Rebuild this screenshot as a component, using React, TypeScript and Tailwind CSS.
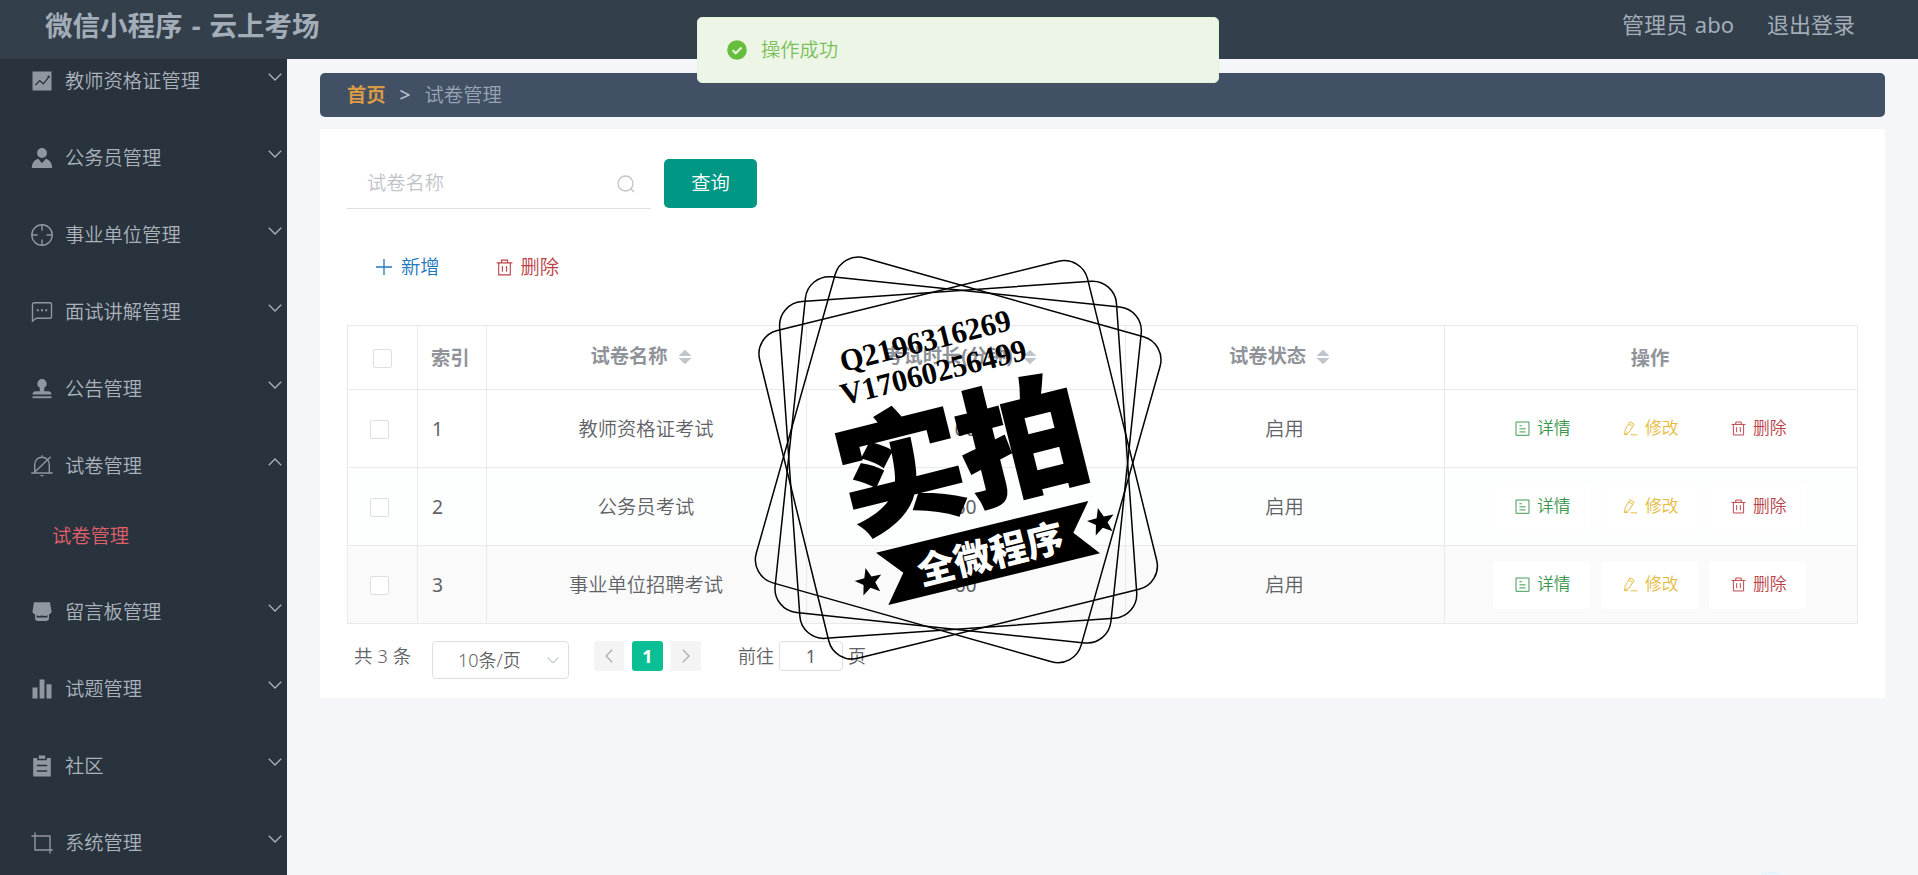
import type { ReactNode } from "react";

type IconProps = { className?: string };

const MENU = [
  { title: "教师资格证管理", icon: <TrendIcon /> },
  { title: "公务员管理", icon: <UserIcon /> },
  { title: "事业单位管理", icon: <AimIcon /> },
  { title: "面试讲解管理", icon: <ChatIcon /> },
  { title: "公告管理", icon: <StampIcon /> },
  { title: "试卷管理", icon: <BellOffIcon />, children: ["试卷管理"] },
  { title: "留言板管理", icon: <ShopIcon /> },
  { title: "试题管理", icon: <BarsIcon /> },
  { title: "社区", icon: <ClipboardIcon /> },
  { title: "系统管理", icon: <CropIcon /> },
];

const ROWS = [
  { id: 1, name: "教师资格证考试", minutes: 60, status: "启用" },
  { id: 2, name: "公务员考试", minutes: 60, status: "启用" },
  { id: 3, name: "事业单位招聘考试", minutes: 60, status: "启用" },
];

/* ---------- icons ---------- */

function Line({ children, className = "size-[22px]", width = 1.4 }: { children: ReactNode; className?: string; width?: number }) {
  return (
    <svg viewBox="0 0 22 22" className={className} fill="none" stroke="currentColor" strokeWidth={width}>
      {children}
    </svg>
  );
}

function Solid({ children }: { children: ReactNode }) {
  return (
    <svg viewBox="0 0 22 22" className="size-[22px]" fill="currentColor">
      {children}
    </svg>
  );
}

function TrendIcon() {
  return (
    <Solid>
      <path d="M1.5 1.5h19v19h-19z" />
      <path d="M4.5 15l4.2-4.4 3.6 3.2 5.4-6.6" fill="none" stroke="#28333e" strokeWidth="1.3" />
      <circle cx="17.6" cy="6.8" r="1.2" fill="#28333e" />
    </Solid>
  );
}

function UserIcon() {
  return (
    <Solid>
      <circle cx="11" cy="6" r="5" />
      <path d="M.8 21c.2-5.2 2.6-8.3 6.5-9.3l3.7 4.6 3.7-4.6c3.9 1 6.3 4.1 6.5 9.3z" />
    </Solid>
  );
}

function AimIcon() {
  return (
    <Line>
      <circle cx="11" cy="11" r="10.2" />
      <path d="M11 1v5.5M11 15.5V21M1 11h5.5M15.5 11H21" />
    </Line>
  );
}

function ChatIcon() {
  return (
    <Line>
      <path d="M1.5 20V3.2A1.5 1.5 0 0 1 3 1.7h16a1.5 1.5 0 0 1 1.5 1.5v12.6a1.5 1.5 0 0 1-1.5 1.5H5.2z" />
      <path d="M5.8 9.2h2M10 9.2h2M14.2 9.2h2" strokeWidth="2" />
    </Line>
  );
}

function StampIcon() {
  return (
    <Solid>
      <path d="M8.8 9.8C7.3 8.7 6.3 7.5 6.3 5.700a4.7 4.7 0 0 1 9.4 0c0 1.8-1 3-2.5 4.100v3.400h4c2 0 3.3 1.2 3.3 3.300h-19c0-2.100 1.300-3.300 3.300-3.300h4z" />
      <path d="M1.5 18.300h19v1.900h-19z" />
    </Solid>
  );
}

function BellOffIcon() {
  return (
    <Line>
      <path d="M3.7 18V9.5a7.3 7.3 0 0 1 14.6 0V18M.3 18h21.4M11 .3v2M9.5 20.6h3M19.7 1.7L2.8 18" />
    </Line>
  );
}

function ShopIcon() {
  return (
    <Solid>
      <path d="M3 1.2h16l1.5 9c0 2-1.4 3-3 3h-13c-1.6 0-3-1-3-3z" />
      <path d="M4 13h14v4a3 3 0 0 1-3 3H7a3 3 0 0 1-3-3z" />
      <path d="M5.5 14.2q2.700 1.600 5.500 0 2.800 1.600 5.500 0v2.200h-11z" fill="#28333e" />
      <path d="M6.500 13h9v1.200h-9z" />
    </Solid>
  );
}

function BarsIcon() {
  return (
    <Solid>
      <path d="M1.5 9.5h5v11h-5zM8.6 1.5h4.8v19H8.6zM15.5 6.2h5v14.3h-5z" />
    </Solid>
  );
}

function ClipboardIcon() {
  return (
    <Solid>
      <path d="M2.2 3h4v2.3h9.6V3h4v18.5H2.2zM7.8.5h6.4v3.3H7.8z" />
      <path d="M5.8 10.5h10.4M5.8 16h10.4" stroke="#28333e" strokeWidth="1.3" />
    </Solid>
  );
}

function CropIcon() {
  return (
    <Line>
      <path d="M.5 4H19v17.5M4 .5V18h17.8" />
    </Line>
  );
}

function TrashIcon({ className }: IconProps) {
  return (
    <Line className={className}>
      <path d="M.8 5h20.400M7 5V1.500h8V5M3.500 5v15.500h15V5M8.300 9v7.500M13.700 9v7.500" />
    </Line>
  );
}

function DocIcon({ className }: IconProps) {
  return (
    <Line className={className}>
      <path d="M1.5 1.5h19V21h-19zM6.5 7H10M6.5 11.5h9M6.5 16h9" />
    </Line>
  );
}

function EditIcon({ className }: IconProps) {
  return (
    <Line className={className}>
      <path d="M2.200 19.500l1.300-7.500L10.300 1.200l6 3.600-7 11.200zM8.500 4.300l5.800 3.600M2 19.800h5M11.500 20.300H21" />
    </Line>
  );
}

function Chevron({ className }: IconProps) {
  return (
    <svg viewBox="0 0 14 8" className={className} fill="none" stroke="currentColor" strokeWidth="1.3">
      <path d="M.8.8L7 7 13.2.8" />
    </svg>
  );
}

function SortCaret() {
  return (
    <svg viewBox="0 0 14 16" className="h-4 w-3.5 text-[#c0c4cc]" fill="currentColor">
      <path d="M7 .8L13.5 7H.5zM7 15.2L.5 9h13z" />
    </svg>
  );
}

/* ---------- layout ---------- */

function Header() {
  return (
    <header className="flex h-[59px] shrink-0 items-start justify-between bg-[#343f4c] pl-[45px] pr-[63px] text-[#a3adb8]">
      <h1 className="mt-[6px] text-[27.5px] font-bold leading-[40px] [word-spacing:2px]">微信小程序 - 云上考场</h1>
      <div className="mt-[4px] flex gap-[33px] text-[22px] font-normal leading-[40px]">
        <span className="[word-spacing:1px]">管理员 abo</span>
        <span>退出登录</span>
      </div>
    </header>
  );
}

function Sidebar() {
  return (
    <aside className="w-[287px] shrink-0 overflow-hidden bg-[#28333e] text-[19.3px] text-[#abb2ba]">
      <ul className="-mt-[17px]">
        {MENU.map((item) => (
          <li key={item.title}>
            <div className="flex h-[77px] items-center pl-[31px] pr-[5px]">
              <span className="text-[#9097a1]">{item.icon}</span>
              <span className="ml-3 flex-1 leading-[30px]">{item.title}</span>
              <Chevron className={item.children ? "mb-[8px] w-[14px] rotate-180" : "mb-[8px] w-[14px]"} />
            </div>
            {item.children?.map((child) => (
              <div key={child} className="flex h-[69px] items-center pb-[4px] pl-[52px] text-[#e0606a]">
                {child}
              </div>
            ))}
          </li>
        ))}
      </ul>
    </aside>
  );
}

function Breadcrumb() {
  return (
    <nav className="flex h-[44px] items-center rounded-[5px] bg-[#415065] pl-[27px] text-[19.3px] leading-[30px]">
      <span className="font-bold text-[#d99a45]">首页</span>
      <span className="ml-[14px] font-medium text-[#b8c0cc]">&gt;</span>
      <span className="ml-[14px] text-[#99a5b5]">试卷管理</span>
    </nav>
  );
}

function Checkbox() {
  return <span className="block size-[19px] rounded-[2px] border border-[#dcdfe6] bg-white" />;
}

function Cell({ children, className = "" }: { children: ReactNode; className?: string }) {
  return <div className={`flex items-center border-b border-r border-[#e8eaee] ${className}`}>{children}</div>;
}

function RowButton({ icon, label, color }: { icon: ReactNode; label: string; color: string }) {
  return (
    <button className={`flex h-[48px] w-[97px] items-center gap-[7px] rounded-[4px] bg-white pb-[1px] pl-[22px] text-[16.8px] ${color}`}>
      {icon}
      {label}
    </button>
  );
}

function ExamTable() {
  const cols = "grid grid-cols-[70px_69px_320px_319px_319px_1fr]";
  return (
    <div className="w-[1511px] border-l border-t border-[#e8eaee] text-[19.3px] text-[#606266]">
      <div className={`${cols} h-[64px] font-bold text-[#909399]`}>
        <Cell className="pl-[25px] pt-[2px]"><Checkbox /></Cell>
        <Cell className="pl-[13px] pt-[2px]">索引</Cell>
        {["试卷名称", "考试时长(分钟)", "试卷状态"].map((title) => (
          <Cell key={title} className="justify-center gap-[10px] pb-[2px] pr-[11px]">
            {title}
            <SortCaret />
          </Cell>
        ))}
        <Cell className="justify-center pr-[2px] pt-[2px]">操作</Cell>
      </div>
      {ROWS.map((row, i) => (
        <div key={row.id} className={`${cols} h-[78px] ${i === 2 ? "bg-[#fafafa]" : i === 1 ? "bg-[#fdfefe]" : "bg-white"}`}>
          <Cell className="pl-[22px] pt-[2px]"><Checkbox /></Cell>
          <Cell className="pl-[14px] pt-[2px] font-normal">{row.id}</Cell>
          <Cell className="justify-center pr-[1px] pt-[2px]">{row.name}</Cell>
          <Cell className="justify-center pr-[1px] pt-[2px] font-normal">{row.minutes}</Cell>
          <Cell className="justify-center pr-[1px] pt-[2px]">{row.status}</Cell>
          <Cell className="justify-center gap-[11px] pr-[3px]">
            <RowButton icon={<DocIcon className="size-[15px]" />} label="详情" color="text-[#38964e]" />
            <RowButton icon={<EditIcon className="size-[15px]" />} label="修改" color="text-[#e6bb3c]" />
            <RowButton icon={<TrashIcon className="size-[15px]" />} label="删除" color="text-[#b93f46]" />
          </Cell>
        </div>
      ))}
    </div>
  );
}

function Pagination() {
  return (
    <div className="mt-[17px] flex items-start pl-[7px] text-[18px] leading-[30px] text-[#606266]">
      <span className="w-[78px] text-[18.5px]">共 3 条</span>
      <div className="flex h-[38px] w-[137px] items-center justify-between rounded-[4px] border border-[#dcdfe6] pl-[25px] pr-[9px]">
        <span>10条/页</span>
        <Chevron className="w-[12px] text-[#c0c4cc]" />
      </div>
      <div className="ml-[25px] flex gap-2">
        <span className="flex h-[30px] w-[30px] items-center justify-center rounded-[2px] bg-[#f4f4f5]">
          <Chevron className="w-[14px] rotate-90 text-[#a9adb4]" />
        </span>
        <span className="flex h-[30px] w-[31px] items-center justify-center rounded-[3px] bg-[#0abf94] font-bold text-white">1</span>
        <span className="flex h-[30px] w-[30px] items-center justify-center rounded-[2px] bg-[#f4f4f5]">
          <Chevron className="w-[14px] -rotate-90 text-[#a9adb4]" />
        </span>
      </div>
      <span className="ml-[37px]">前往</span>
      <span className="ml-[5px] h-[30px] w-[64px] rounded-[4px] border border-[#dcdfe6] text-center font-normal leading-[28px]">1</span>
      <span className="ml-[5px]">页</span>
    </div>
  );
}

function Message() {
  return (
    <div className="absolute left-[697px] top-[17px] flex h-[66px] w-[522px] items-center rounded-[5px] border border-[#e1f3d8] bg-[#edf6e6] pl-[29px] text-[19.3px] text-[#7abf58]">
      <svg viewBox="0 0 20 20" className="size-[20px]">
        <circle cx="10" cy="10" r="9.8" fill="#67bd3c" />
        <path d="M5.6 10.2l3.2 3.1 5.7-5.8" fill="none" stroke="#edf6e6" strokeWidth="2" />
      </svg>
      <span className="ml-[14px]">操作成功</span>
    </div>
  );
}

const STAR = "M0-43L11-14 41-13 18 5 26 35 0 18-26 35-18 5-41-13-11-14z";

function Watermark() {
  return (
    <svg viewBox="0 0 1320 1290" className="pointer-events-none absolute left-[740px] top-[240px] h-[430px] w-[440px]">
      <g fill="none" stroke="#000" strokeWidth="4.5">
        {[15.8, 6, -4, -13.8].map((deg) => (
          <rect key={deg} x="148" y="153" width="1013" height="1013" rx="72" transform={`rotate(${deg} 654.5 659.5)`} />
        ))}
      </g>
      <g fontFamily="'Liberation Serif', serif" fontWeight="700" fontSize="93">
        <text transform="translate(308 396) rotate(-14)" textLength="526" lengthAdjust="spacingAndGlyphs">Q2196316269</text>
        <text transform="translate(310 496) rotate(-14)" textLength="572" lengthAdjust="spacingAndGlyphs">V17060256499</text>
      </g>
      <g transform="translate(345 876) rotate(-14)" stroke="#000" strokeWidth="7">
        <text x="-10" y="-7" fontSize="378" fontWeight="900" textLength="752">实拍</text>
      </g>
      <path d="M408 938L1045 783 1000 878 1080 940 445 1095 490 998z" />
      <text transform="translate(544 1036) rotate(-14)" fontSize="112" fontWeight="900" fill="#fff">
        全微程序
      </text>
      <path d={STAR} transform="translate(387 1026) rotate(-14)" />
      <path d={STAR} transform="translate(1084 846) rotate(-14)" />
    </svg>
  );
}

export default function App() {
  return (
    <div className="relative flex h-[875px] w-[1918px] flex-col overflow-hidden bg-[#f4f6fa] font-['Noto_Sans','Noto_Sans_CJK_SC',sans-serif] font-[350]">
      <Header />
      <div className="flex min-h-0 flex-1">
        <Sidebar />
        <main className="flex-1 px-[33px] pt-[14px]">
          <Breadcrumb />
          <section className="mt-[12px] h-[569px] bg-white pl-[27px] pt-[30px]">
            <div className="flex h-[50px] items-start gap-[13px]">
              <div className="flex h-[50px] w-[304px] items-center justify-between border-b border-[#dcdfe6] pl-[20px] pr-[16px] text-[19.3px] text-[#bfc3ca]">
                <span>试卷名称</span>
                <svg viewBox="0 0 18 18" className="size-[18px]" fill="none" stroke="currentColor" strokeWidth="1.3">
                  <circle cx="8.5" cy="8.5" r="7.5" />
                  <path d="M13.8 13.8L17 17" />
                </svg>
              </div>
              <button className="h-[49px] w-[93px] rounded-[5px] bg-[#009785] text-[19.3px] text-white">查询</button>
            </div>
            <div className="mt-[43px] flex h-[30px] items-center pl-[29px] text-[19.3px]">
              <button className="flex items-center gap-[9px] text-[#2077be]">
                <Line className="size-[16px]" width={1.8}>
                  <path d="M11 0v22M0 11h22" />
                </Line>
                新增
              </button>
              <button className="ml-[56px] flex items-center gap-[8px] text-[#bb3f45]">
                <TrashIcon className="size-[17px]" />
                删除
              </button>
            </div>
            <div className="mt-[43px]">
              <ExamTable />
            </div>
            <Pagination />
          </section>
        </main>
      </div>
      <Message />
      <Watermark />
      {/* top edge of the floating helper ball */}
      <span className="absolute left-[1751px] top-[872px] size-[40px] rounded-full border border-[#dff3fb] bg-[#eaf8fe]" />
    </div>
  );
}
